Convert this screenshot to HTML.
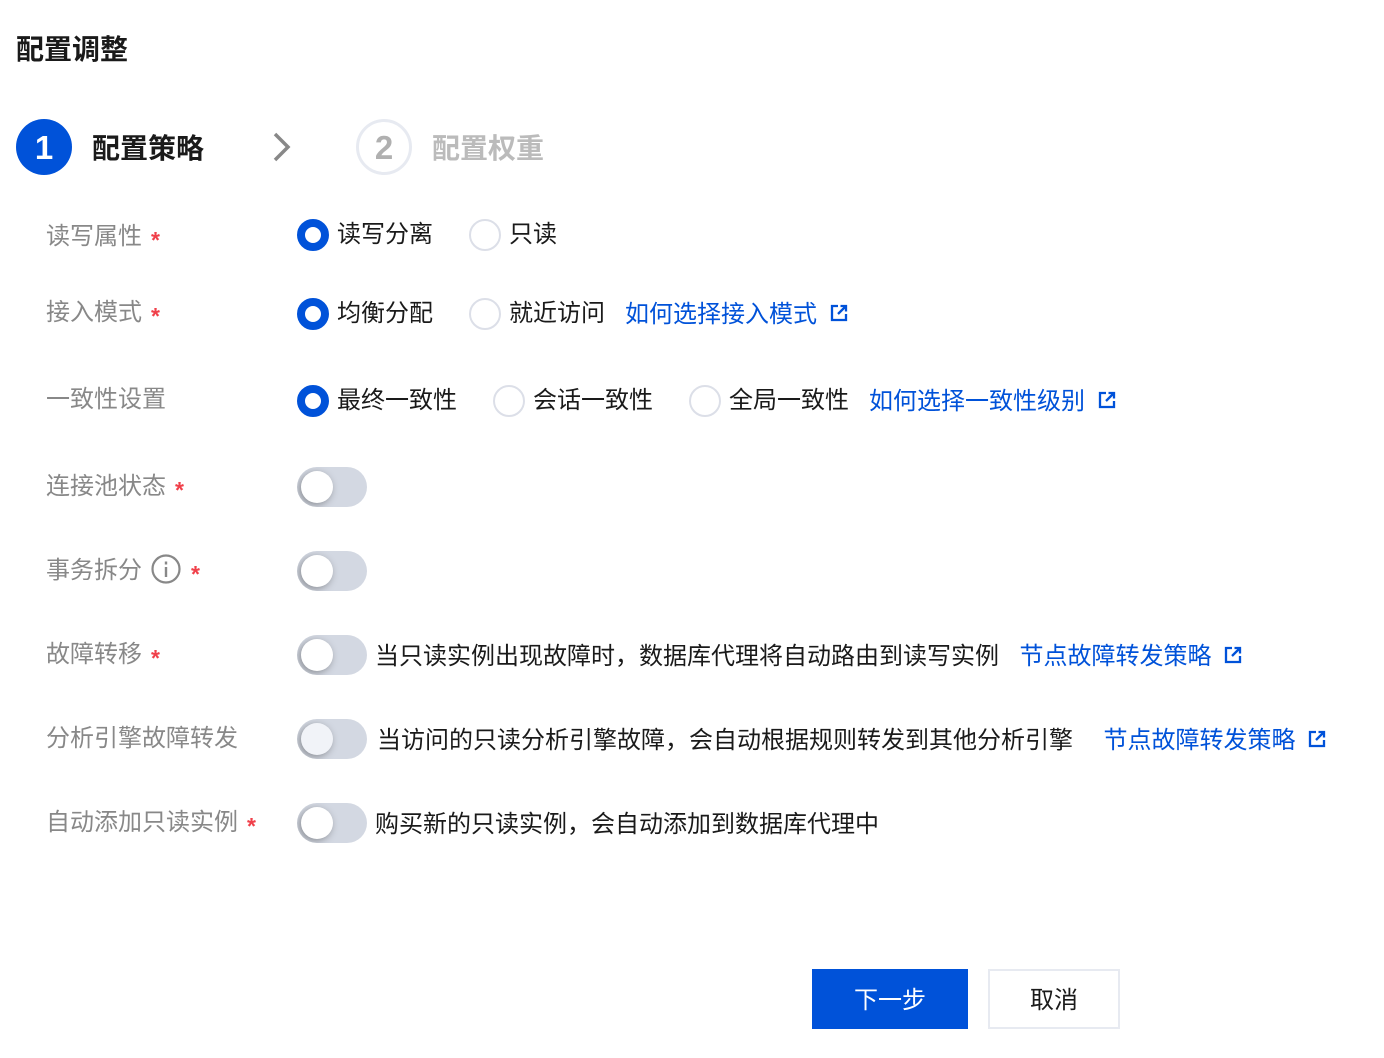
<!DOCTYPE html>
<html lang="zh-CN"><head><meta charset="utf-8"><title>配置调整</title>
<style>
html,body{margin:0;padding:0;background:#fff}
body{width:1384px;height:1058px;position:relative;overflow:hidden;font-family:"Liberation Sans","Noto Sans CJK SC",sans-serif;color:#1a1a1a}
.t{position:absolute;white-space:nowrap;font-size:24px;line-height:32px;margin-top:2px}
.l{color:#888}
.a{color:#0052d9}
.s{position:absolute;white-space:nowrap;color:#f0404a;font-size:23px;line-height:32px;font-weight:700;margin:1px 0 0 1px}
.r{position:absolute;left:297px;width:32px;height:32px;border-radius:50%;box-sizing:border-box;border:8px solid #0052d9;background:#fff}
.o{position:absolute;width:32px;height:32px;border-radius:50%;box-sizing:border-box;border:2px solid #dcdfe8;background:#fff}
.sw{position:absolute;left:297px;width:70px;height:40px;border-radius:20px;background:#d3d8e2;overflow:hidden}
.sw i{position:absolute;left:4px;top:4px;width:32px;height:32px;border-radius:50%;background:#fff;box-shadow:-2px 2px 8px rgba(0,0,0,.35)}
.e{position:absolute;width:18px;height:18px}
</style></head><body>
<div class="t" style="left:16px;top:30px;font-size:28px;line-height:40px;font-weight:700;margin-top:0">配置调整</div>

<div style="position:absolute;left:16px;top:119px;width:56px;height:56px;border-radius:50%;background:#0052d9;color:#fff;font-size:33px;font-weight:700;line-height:58px;text-align:center">1</div>
<div class="t" style="left:92px;top:128px;font-size:28px;line-height:40px;font-weight:700;margin-top:1px">配置策略</div>
<svg style="position:absolute;left:270px;top:129px" width="24" height="36" viewBox="0 0 24 36"><path d="M5 5l13 13L5 31" fill="none" stroke="#888" stroke-width="3.5"/></svg>
<div style="position:absolute;left:356px;top:119px;width:56px;height:56px;box-sizing:border-box;border:3px solid #e7eaf1;border-radius:50%;color:#b0b0b0;font-size:33px;font-weight:700;line-height:52px;text-align:center">2</div>
<div class="t" style="left:432px;top:128px;font-size:28px;line-height:40px;font-weight:700;color:#bbb;margin-top:1px">配置权重</div>

<div class="t l" style="left:46px;top:219px">读写属性</div><div class="s" style="left:150px;top:223px">*</div>
<div class="r" style="top:219px"></div><div class="t" style="left:337px;top:217px">读写分离</div>
<div class="o" style="left:469px;top:219px"></div><div class="t" style="left:509px;top:217px">只读</div>

<div class="t l" style="left:46px;top:295px">接入模式</div><div class="s" style="left:150px;top:299px">*</div>
<div class="r" style="top:298px"></div><div class="t" style="left:337px;top:296px">均衡分配</div>
<div class="o" style="left:469px;top:298px"></div><div class="t" style="left:509px;top:296px">就近访问</div>
<div class="t a" style="left:625px;top:297px">如何选择接入模式</div>
<svg class="e" style="left:830px;top:304px" viewBox="0 0 18 18"><path d="M8 2H2v14h14v-6M10.500 2H16v5.500M16 2L8 10" fill="none" stroke="#0052d9" stroke-width="2.300"/></svg>

<div class="t l" style="left:46px;top:382px">一致性设置</div>
<div class="r" style="top:385px"></div><div class="t" style="left:337px;top:383px">最终一致性</div>
<div class="o" style="left:493px;top:385px"></div><div class="t" style="left:533px;top:383px">会话一致性</div>
<div class="o" style="left:689px;top:385px"></div><div class="t" style="left:729px;top:383px">全局一致性</div>
<div class="t a" style="left:869px;top:384px">如何选择一致性级别</div>
<svg class="e" style="left:1098px;top:391px" viewBox="0 0 18 18"><path d="M8 2H2v14h14v-6M10.500 2H16v5.500M16 2L8 10" fill="none" stroke="#0052d9" stroke-width="2.300"/></svg>

<div class="t l" style="left:46px;top:469px">连接池状态</div><div class="s" style="left:174px;top:473px">*</div>
<div class="sw" style="top:467px"><i></i></div>

<div class="t l" style="left:46px;top:553px">事务拆分</div>
<svg style="position:absolute;left:151px;top:554px" width="30" height="30" viewBox="0 0 30 30"><circle cx="15" cy="15" r="13.500" fill="none" stroke="#888" stroke-width="2.200"/><path d="M15 7.500v3M15 13v10" stroke="#888" stroke-width="2.400"/></svg>
<div class="s" style="left:190px;top:557px">*</div>
<div class="sw" style="top:551px"><i></i></div>

<div class="t l" style="left:46px;top:637px">故障转移</div><div class="s" style="left:150px;top:641px">*</div>
<div class="sw" style="top:635px"><i></i></div>
<div class="t" style="left:375px;top:639px">当只读实例出现故障时，数据库代理将自动路由到读写实例</div>
<div class="t a" style="left:1019.500px;top:639px">节点故障转发策略</div>
<svg class="e" style="left:1224px;top:646px" viewBox="0 0 18 18"><path d="M8 2H2v14h14v-6M10.500 2H16v5.500M16 2L8 10" fill="none" stroke="#0052d9" stroke-width="2.300"/></svg>

<div class="t l" style="left:46px;top:721px">分析引擎故障转发</div>
<div class="sw" style="top:719px"><i style="background:#f1f3f8"></i></div>
<div class="t" style="left:377px;top:723px">当访问的只读分析引擎故障，会自动根据规则转发到其他分析引擎</div>
<div class="t a" style="left:1103.500px;top:723px">节点故障转发策略</div>
<svg class="e" style="left:1308px;top:730px" viewBox="0 0 18 18"><path d="M8 2H2v14h14v-6M10.500 2H16v5.500M16 2L8 10" fill="none" stroke="#0052d9" stroke-width="2.300"/></svg>

<div class="t l" style="left:46px;top:805px">自动添加只读实例</div><div class="s" style="left:246px;top:809px">*</div>
<div class="sw" style="top:803px"><i></i></div>
<div class="t" style="left:375px;top:807px">购买新的只读实例，会自动添加到数据库代理中</div>

<div style="position:absolute;left:812px;top:969px;width:156px;height:60px;background:#0052d9;color:#fff;font-size:24px;line-height:64px;text-align:center">下一步</div>
<div style="position:absolute;left:988px;top:969px;width:132px;height:60px;box-sizing:border-box;border:2px solid #e7eaf1;font-size:24px;line-height:60px;text-align:center">取消</div>
</body></html>
